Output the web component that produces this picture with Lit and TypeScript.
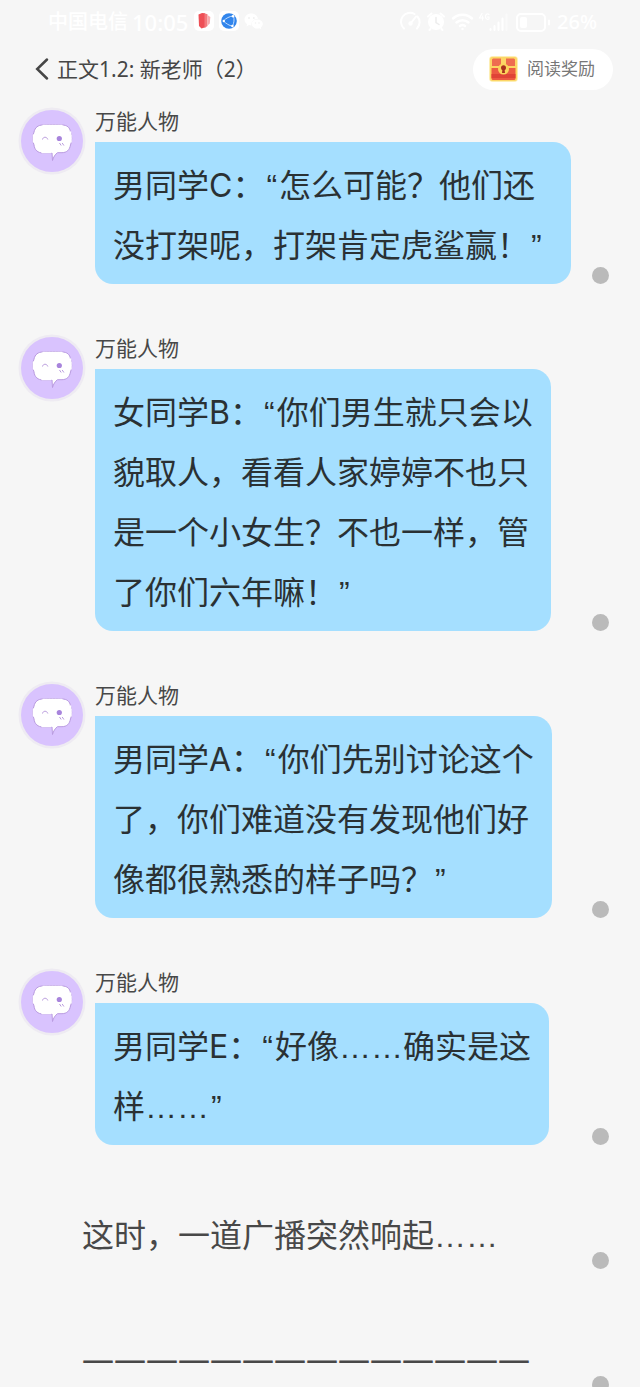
import { LitElement, html, svg, css } from "lit";
import { customElement, property } from "lit/decorators.js";
import { classMap } from "lit/directives/class-map.js";

interface Entry {
  speaker?: string;
  lines: string[];
  wide?: boolean;
}

const entries: Entry[] = [
  {
    speaker: "万能人物",
    lines: ["男同学C：“怎么可能？他们还", "没打架呢，打架肯定虎鲨赢！”"],
    wide: true,
  },
  {
    speaker: "万能人物",
    lines: [
      "女同学B：“你们男生就只会以",
      "貌取人，看看人家婷婷不也只",
      "是一个小女生？不也一样，管",
      "了你们六年嘛！”",
    ],
  },
  {
    speaker: "万能人物",
    lines: [
      "男同学A：“你们先别讨论这个",
      "了，你们难道没有发现他们好",
      "像都很熟悉的样子吗？”",
    ],
  },
  { speaker: "万能人物", lines: ["男同学E：“好像……确实是这", "样……”"] },
  { lines: ["这时，一道广播突然响起……"] },
  { lines: ["——————————————"] },
];

// Ellipses use a face whose three dots span a full em on the baseline;
// quotes use the same face for its round, comma-shaped marks.
const renderLine = (line: string) =>
  line.split(/(…+|[“”A-Z])/).map((part) => {
    if (part.startsWith("…")) return html`<span class="dots">${part}</span>`;
    if (part === "“" || part === "”") return html`<span class="quote">${part}</span>`;
    if (/^[A-Z]$/.test(part)) return html`<span class="latin">${part}</span>`;
    return part;
  });

@customElement("status-bar")
class StatusBar extends LitElement {
  static styles = css`
    :host {
      display: flex;
      align-items: center;
      height: 44px;
      padding: 0 43px 0 48px;
      color: #fff;
      font-weight: 500;
      font-size: 20px;
      line-height: 28px;
    }
    .time {
      margin-left: 4px;
      font-size: 22px;
    }
    .apps {
      margin-left: 6px;
    }
    .system {
      margin-left: auto;
    }
    .level {
      margin-left: 5px;
    }
    svg {
      display: block;
    }
  `;

  render() {
    return html`
      <span>中国电信</span>
      <span class="time">10:05</span>
      <svg class="apps" width="72" height="24" viewBox="0 0 72 24" aria-hidden="true">
        <rect x="0" y="1" width="20" height="20" rx="5" fill="#fff" />
        <path d="M4.500 4.500 8 3 11 3.200 12 17 7.500 18.600 5 16Z" fill="#ee4f56" />
        <path d="M10.500 3.200 13.500 4.200 13.500 16 10.500 18Z" fill="#f37a7e" />
        <path d="M13.500 5 16.300 7 15.800 13.500 13.500 15.500Z" fill="#f8a9ac" />
        <rect x="25" y="1" width="20" height="20" rx="5" fill="#fff" />
        <circle cx="35" cy="11" r="7.800" fill="#3185ec" />
        <path d="M29.500 11C32 8 35.500 6.500 39.500 5.800C40.500 9.500 40 13 38.500 16.200C35 15.500 32 13.500 29.500 11Z" fill="none" stroke="#cfe4ff" stroke-width=".9" />
        <circle cx="29.800" cy="11" r="1.200" fill="#fff" />
        <circle cx="39" cy="6.200" r="1.200" fill="#fff" />
        <circle cx="38.400" cy="16" r="1.200" fill="#fff" />
        <path
          d="M57.500 3.500c-4.200 0-7 2.700-7 6 0 2 1 3.600 2.600 4.700l-.6 2.200 2.500-1.300c.8.2 1.600.3 2.500.3-.7-3.800 2.300-6.700 6.600-6.700-.8-3.100-3.400-5.200-6.600-5.200z"
          fill="#fff"
        />
        <path
          d="M63.300 9.500c-3.200 0-5.500 2-5.500 4.500s2.300 4.500 5.500 4.500c.7 0 1.400-.1 2-.3l2 1-.5-1.800c1.300-.9 2-2.100 2-3.400 0-2.500-2.300-4.500-5.500-4.500z"
          fill="#fff"
        />
        <g fill="#f1f1f1">
          <circle cx="55" cy="8" r="1" /><circle cx="59.800" cy="8" r="1" />
          <circle cx="61.500" cy="13" r=".8" /><circle cx="65" cy="13" r=".8" />
        </g>
      </svg>
      <svg
        class="system"
        width="152"
        height="24"
        viewBox="0 0 152 24"
        fill="none"
        stroke="#fff"
        stroke-width="2"
        stroke-linecap="round"
        aria-hidden="true"
      >
        <path d="M4 18.500A9 9 0 0 1 14.500 4M17.500 6.500A9 9 0 0 1 17 18.500M10.500 13.500 16 6.500" />
        <circle cx="10.500" cy="13.500" r="1.200" />
        <circle cx="36" cy="12" r="8" fill="#fff" stroke="none" />
        <path d="M28 6.500 31.500 3.500M44 6.500 40.500 3.500M30.500 19 29.500 20M41.500 19 42.500 20" />
        <path d="M36 7.500V12.500L39 14.500" stroke="#ededed" stroke-width="1.500" />
        <path d="M53 8.500A14 14 0 0 1 72 8.500M56.500 12.500A9 9 0 0 1 68.500 12.500M60 16A4 4 0 0 1 65 16" stroke-width="2.500" />
        <circle cx="62.500" cy="19" r="1.200" fill="#fff" stroke="none" />
        <path d="M82 3.500 79.500 8H83.500M82.500 6V10M89 4.500C87 3 85.500 4.500 85.500 6.500S87 10 89 9V7H87.500" stroke-width="1.200" />
        <path d="M90.500 19V20M94.500 16V20M98.500 12.500V20M102.500 8.500V20" />
        <path d="M106.500 4.500V20" stroke="#fafafa" />
        <rect x="117" y="4" width="28" height="17" rx="4" />
        <rect x="120" y="7" width="7" height="11" rx="2" fill="#fff" stroke="none" />
        <path d="M149 10.500V14.500" />
      </svg>
      <span class="level">26%</span>
    `;
  }
}

@customElement("chapter-header")
class ChapterHeader extends LitElement {
  static styles = css`
    :host {
      display: flex;
      align-items: center;
      justify-content: space-between;
      height: 50px;
      padding: 0 27px 0 34px;
    }
    button {
      border: 0;
      margin: 0;
      font: inherit;
      cursor: pointer;
    }
    .title {
      display: flex;
      align-items: center;
      gap: 7px;
      margin: 0;
      color: #464646;
      font-size: 21px;
      font-weight: 400;
      line-height: 28px;
    }
    .back {
      display: block;
      padding: 0;
      background: none;
    }
    .reward {
      display: flex;
      align-items: center;
      gap: 8px;
      height: 41px;
      padding: 0 18px 0 15px;
      border-radius: 21px;
      background: #fff;
      color: #777;
      font-size: 17px;
      line-height: 24px;
    }
    svg {
      display: block;
    }
  `;

  render() {
    return html`
      <h1 class="title">
        <button class="back" aria-label="返回">
          <svg width="16" height="24" viewBox="0 0 16 24" fill="none">
            <path d="M13 2.500 3.200 12 13 21.500" stroke="#464646" stroke-width="2.500" stroke-linecap="round" />
          </svg>
        </button>
        正文1.2: 新老师（2）
      </h1>
      <button class="reward">
        <svg width="31" height="28" viewBox="0 0 31 28" aria-hidden="true">
          <rect x="1" y="1" width="29" height="26" rx="4" fill="#fdeeb4" />
          <rect x="2" y="2" width="27" height="24" rx="2" fill="#fcd667" />
          <path d="M5 3.500H13V11H4V4.500ZM18 3.500H26L27 4.500V11H18Z" fill="#ee6c50" />
          <path d="M3.500 13H27.500V24L26.500 25H4.500L3.500 24Z" fill="#ec5a42" />
          <path d="M3.500 19H27.500V23H3.500Z" fill="#e04337" />
          <path d="M2 12H29" stroke="#fcd563" stroke-width="2" />
          <circle cx="15.500" cy="14" r="5.500" fill="#fbd45c" />
          <circle cx="15.500" cy="12.800" r="2.500" fill="#a8301d" />
          <path d="M14.500 13.500H16.500L17 18H14Z" fill="#a8301d" />
        </svg>
        阅读奖励
      </button>
    `;
  }
}

const avatar = svg`
  <circle cx="34" cy="34" r="33.500" fill="#eeebf2" />
  <circle cx="34" cy="34" r="31" fill="#d9c3fe" />
  <path
    d="M25 18C28 17.500 41 17.500 44 18C49 18 52 20.500 52.500 25C54 28 54 35 52.500 38C51.500 43 49 45.500 44 45.700H39.500C37 47.500 35.500 50 34.500 53.500L34 46H25C20 46 16.500 43 16 38C14.500 35 14.500 28 16 25C17 20.500 20 18 25 18Z"
    fill="#fff"
    stroke="#b99be0"
    stroke-width="1"
  />
  <path
    d="M25 18.500H44M52.500 25V27M15.500 28V35M53 28V35M24 45.500H33"
    stroke="#fff"
    stroke-width="1.500"
    stroke-linecap="round"
  />
  <path d="M24.500 32.500C25 29.500 29 29.500 29.800 32.500" fill="none" stroke="#b99bdd" stroke-width="1" />
  <circle cx="41.300" cy="31.500" r="2.600" fill="#a884dc" />
  <path d="M41.500 36 43.200 38.500M44.200 36 45.900 38.500" stroke="#b99bdd" stroke-width="1" />
`;

@customElement("story-entry")
class StoryEntry extends LitElement {
  @property({ attribute: false }) entry!: Entry;

  static styles = css`
    :host {
      display: flex;
      align-items: flex-end;
      justify-content: space-between;
      padding: 0 31px 0 18px;
    }
    .message {
      display: flex;
      align-items: flex-start;
      gap: 9px;
    }
    .avatar {
      display: block;
      flex: none;
    }
    .speaker {
      margin-bottom: 7px;
      color: #484848;
      font-size: 21px;
      line-height: 28px;
    }
    .bubble,
    .narration {
      margin: 0;
      font-size: 32px;
      line-height: 60px;
      white-space: nowrap;
    }
    .bubble {
      width: fit-content;
      padding: 13px 18px 9px;
      border-radius: 0 18px 18px 18px;
      background: #a5dfff;
      color: #2a3134;
    }
    .bubble.wide {
      padding-right: 27px;
    }
    .narration {
      padding: 10px 0 4px 64px;
      color: #484848;
    }
    .line {
      display: block;
    }
    .dots,
    .quote {
      font-family: "Liberation Sans", Arial, sans-serif;
      line-height: 1;
    }
    .quote {
      padding: 0 2px;
    }
    .latin {
      font-family: Inter, sans-serif;
      line-height: 1;
    }
    .marker {
      flex: none;
      width: 17px;
      height: 17px;
      border-radius: 50%;
      background: #bababa;
    }
  `;

  render() {
    const { speaker, lines, wide } = this.entry;
    const text = lines.map((line) => html`<span class="line">${renderLine(line)}</span>`);
    return html`
      ${speaker
        ? html`<div class="message">
            <svg class="avatar" width="68" height="68" viewBox="0 0 68 68" aria-hidden="true">${avatar}</svg>
            <div>
              <div class="speaker">${speaker}</div>
              <p class=${classMap({ bubble: true, wide: !!wide })}>${text}</p>
            </div>
          </div>`
        : html`<p class="narration">${text}</p>`}
      <span class="marker"></span>
    `;
  }
}

@customElement("app-root")
class AppRoot extends LitElement {
  static styles = css`
    :host {
      display: block;
      height: 100vh;
      overflow: hidden;
      background: #f6f6f6;
      font-family: "Noto Sans", "Noto Sans CJK SC", sans-serif;
    }
    .story {
      display: flex;
      flex-direction: column;
      gap: 50px;
      padding-top: 13px;
    }
  `;

  render() {
    return html`
      <status-bar></status-bar>
      <chapter-header></chapter-header>
      <main class="story" lang="zh-CN">
        ${entries.map((entry) => html`<story-entry .entry=${entry}></story-entry>`)}
      </main>
    `;
  }
}
